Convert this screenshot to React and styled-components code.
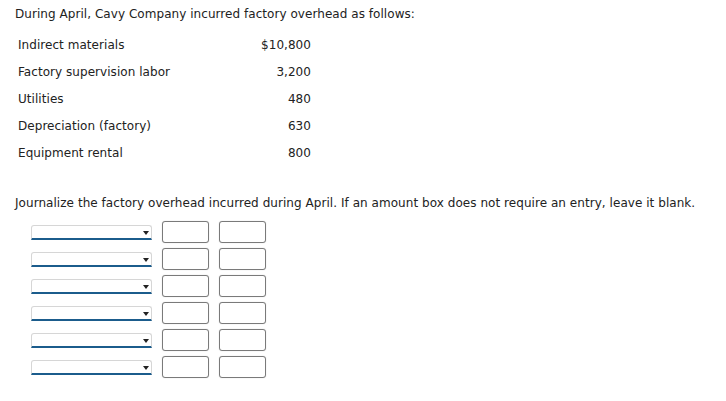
import React from "react";
import styled, { createGlobalStyle } from "styled-components";

const Global = createGlobalStyle`
  html, body { margin: 0; padding: 0; background: #fff; }
  body { font-family: Verdana, "DejaVu Sans", sans-serif; color: #222; letter-spacing: 0.05px; }
`;

const Page = styled.div`
  padding: 6px 15px 0 15px;
  font-size: 12px;
`;

const Intro = styled.p`
  margin: 0;
  line-height: 16px;
  font-size: 12px;
`;

const Table = styled.div`
  margin: 9px 0 0 3px;
  width: 293px;
  display: flex;
  flex-direction: column;
`;

const Row = styled.div`
  display: flex;
  justify-content: space-between;
  align-items: center;
  height: 27px;
  font-size: 12px;
`;

const Instructions = styled.p`
  margin: 29px 0 0 0;
  line-height: 16px;
  font-size: 12px;
`;

const Journal = styled.div`
  margin: 10px 0 0 16px;
  display: flex;
  flex-direction: column;
`;

const JRow = styled.div`
  display: flex;
  align-items: flex-start;
  height: 27px;
`;

const Select = styled.div`
  position: relative;
  box-sizing: border-box;
  margin-top: 4px;
  width: 121px;
  height: 15px;
  border: 1px solid #d6d6d6;
  border-bottom: 2px solid #1b5c8c;
  border-radius: 3px 3px 0 0;
  background: #fff;
`;

const Arrow = styled.span`
  position: absolute;
  right: 2px;
  top: 5px;
  width: 0;
  height: 0;
  border-left: 3px solid transparent;
  border-right: 3px solid transparent;
  border-top: 4px solid #222;
`;

const Amount = styled.div`
  box-sizing: border-box;
  width: 47px;
  height: 22px;
  margin-left: 10px;
  border: 1px solid #7a7a7a;
  border-radius: 3px;
  background: #fff;
  box-shadow: 0 0 1px rgba(0,0,0,0.25);
`;

const items = [
  ["Indirect materials", "$10,800"],
  ["Factory supervision labor", "3,200"],
  ["Utilities", "480"],
  ["Depreciation (factory)", "630"],
  ["Equipment rental", "800"],
];

export default function App() {
  return (
    <Page>
      <Global />
      <Intro>During April, Cavy Company incurred factory overhead as follows:</Intro>
      <Table>
        {items.map(([l, v]) => (
          <Row key={l}>
            <span>{l}</span>
            <span>{v}</span>
          </Row>
        ))}
      </Table>
      <Instructions>
        Journalize the factory overhead incurred during April. If an amount box does not require an entry, leave it blank.
      </Instructions>
      <Journal>
        {[0, 1, 2, 3, 4, 5].map((i) => (
          <JRow key={i}>
            <Select><Arrow /></Select>
            <Amount />
            <Amount />
          </JRow>
        ))}
      </Journal>
    </Page>
  );
}
